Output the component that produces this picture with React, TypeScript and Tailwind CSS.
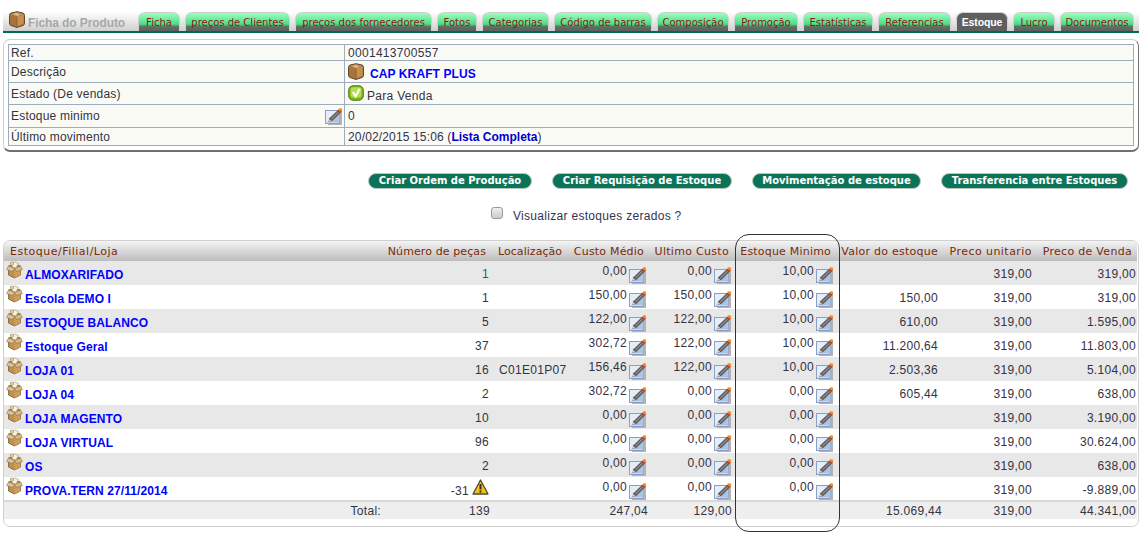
import React from "react";

const Box = ({ className = "" }: { className?: string }) => (
  <svg viewBox="0 0 16 17" className={className}>
    <path d="M8 0.7 L14 2 Q15.5 2.5 15.5 4.5 L15.5 12 Q15.5 14 14 14.5 L8 16.5 L2 14.5 Q0.5 14 0.5 12 L0.5 4.5 Q0.5 2.5 2 2 Z" fill="#a9743a" stroke="#5c4a34" strokeWidth="1" strokeLinejoin="round" />
    <path d="M2 3 L8 1.5 L14 3 L8 5.5 Z" fill="#c9995f" />
    <path d="M8 5.5 L14.6 3.4 L14.6 12.5 L8 15.5 Z" fill="#c88f4e" />
    <path d="M8 5.5 V15.5" stroke="#7d5a2e" strokeWidth="0.8" />
    <path d="M6.5 2 L10 3.2 L9 4.8 L5.5 3.2 Z" fill="#e2c48f" />
  </svg>
);

const OpenBox = () => (
  <svg viewBox="0 0 17 18" className="w-[17px] h-[18px] shrink-0">
    <path d="M2.5 5 L8.5 3 L14.5 5 L14.5 14 L8.5 17 L2.5 14 Z" fill="#c18f4d" stroke="#7a5a30" strokeWidth="0.8" />
    <path d="M8.5 9 V17 L14.5 14 V6 Z" fill="#cf9d5a" />
    <path d="M2.5 5 L0.6 8.5 L6.5 10.5 L8.5 7.5 Z" fill="#dbc7a0" stroke="#8a7248" strokeWidth="0.6" />
    <path d="M14.5 5 L16.4 8.5 L10.5 10.5 L8.5 7.5 Z" fill="#d6ba86" stroke="#8a7248" strokeWidth="0.6" />
    <path d="M5 3 L8.5 0.8 L12.5 2.5 L10 7 L7 6.5 Z" fill="#f7f2e6" stroke="#a08c68" strokeWidth="0.6" />
    <path d="M4 2 L6 0.8 L8 3 L5.5 5 Z" fill="#e6d3ae" stroke="#8a7248" strokeWidth="0.5" />
  </svg>
);

const Edit = ({ className = "" }: { className?: string }) => (
  <svg viewBox="0 0 18 18" className={`w-[18px] h-[18px] shrink-0 ${className}`}>
    <path d="M3 5 H17 V18 H3 Z" fill="#b4b4b4" />
    <rect x="0.5" y="3.5" width="13.5" height="13" fill="#e4edfa" stroke="#8a9fc6" strokeWidth="1" />
    <path d="M1.5 15.5 L13 15.5 L13 6 Z" fill="#a8c2ec" />
    <path d="M3.5 15 L4.3 11.3 L12.8 3.2 L15.6 5.8 L7.2 14 Z" fill="#55535a" />
    <path d="M5.6 11.5 L13 4.5 L14.2 5.8 L6.8 12.8 Z" fill="#8f8578" />
    <path d="M3.5 15 L4.3 11.9 L6.6 14 Z" fill="#e0c8a0" />
    <path d="M12.6 3.4 L14.5 1.4 L17.2 4 L15.4 6 Z" fill="#d63f1e" />
    <circle cx="15.6" cy="2.4" r="1.5" fill="#eb9a20" />
  </svg>
);

const Check = () => (
  <svg viewBox="0 0 16 16" className="w-4 h-4 shrink-0">
    <rect x="0.7" y="0.7" width="14.6" height="14.6" rx="4.5" fill="#7fb414" stroke="#4f7d12" strokeWidth="1" />
    <rect x="2.6" y="2.2" width="10.8" height="10.4" rx="2.4" fill="#b5dd58" />
    <path d="M4.8 7 L7.6 11.4 L11.6 3.8" fill="none" stroke="#ffffff" strokeWidth="2" />
  </svg>
);

const Warn = () => (
  <svg viewBox="0 0 17 16" className="w-[17px] h-4 shrink-0">
    <path d="M8.5 1 L16 15 L1 15 Z" fill="#f2c11c" stroke="#4c4a3a" strokeWidth="1.3" strokeLinejoin="round" />
    <path d="M8.5 5 V10.5" stroke="#33301f" strokeWidth="2" />
    <rect x="7.5" y="11.5" width="2" height="2" fill="#33301f" />
  </svg>
);

const tabs: [string, string][] = [
  ["Ficha", "w-[42px]"],
  ["preços de Clientes", "w-[105px]"],
  ["preços dos fornecedores", "w-[137px]"],
  ["Fotos", "w-[40px]"],
  ["Categorias", "w-[67px]"],
  ["Código de barras", "w-[98px]"],
  ["Composição", "w-[72px]"],
  ["Promoção", "w-[64px]"],
  ["Estatísticas", "w-[70px]"],
  ["Referencias", "w-[73px]"],
  ["Estoque", "w-[52px]"],
  ["Lucro", "w-[42px]"],
  ["Documentos", "w-[74px]"],
];

const Tab = ({ label, w }: { label: string; w: string }) => {
  const active = label === "Estoque";
  return (
    <div
      className={`${w} h-[19px] shrink-0 rounded-t-[7px] border-t border-x flex items-start justify-center pt-[3px] leading-[13px] whitespace-nowrap ${
        active
          ? "border-[#d4d4d4] bg-[#5f5f5f] text-white font-bold text-[10.5px] tracking-[-0.1px] font-['Liberation_Sans',sans-serif]"
          : "border-[#d0d0d0] bg-[linear-gradient(to_bottom,#9affbe_0%,#4fdc88_62%,#5f6f62_76%,#5f5f5f_100%)] text-[#8a1a10] text-[10px] tracking-normal font-['DejaVu_Sans',sans-serif]"
      }`}
    >
      {label}
    </div>
  );
};

const infoRows: { h: string; label: string; value: React.ReactNode; edit?: boolean }[] = [
  { h: "h-[16px]", label: "Ref.", value: <span>0001413700557</span> },
  {
    h: "h-[22px]",
    label: "Descrição",
    value: (
      <span className="flex items-start gap-[6px]">
        <Box className="w-4 h-[17px] shrink-0" />
        <span className="mt-[4px] text-[#0000ff] font-bold tracking-[0.1px]">CAP KRAFT PLUS</span>
      </span>
    ),
  },
  {
    h: "h-[22px]",
    label: "Estado (De vendas)",
    value: (
      <span className="flex items-start gap-[3px]">
        <Check />
        <span className="mt-[4px]">Para Venda</span>
      </span>
    ),
  },
  { h: "h-[23px]", label: "Estoque minimo", value: <span>0</span>, edit: true },
  {
    h: "h-[17px]",
    label: "Último movimento",
    value: (
      <span className="tracking-[0.15px]">
        20/02/2015 15:06 (<span className="text-[#0000cc] font-bold tracking-normal">Lista Completa</span>)
      </span>
    ),
  },
];

const actions: [string, string][] = [
  ["Criar Ordem de Produção", "w-[164px]"],
  ["Criar Requisição de Estoque", "w-[180px]"],
  ["Movimentação de estoque", "w-[169px]"],
  ["Transferencia entre Estoques", "w-[187px]"],
];

const rows: [string, string, string, string, string, string, string, string][] = [
  ["ALMOXARIFADO", "1", "", "0,00", "0,00", "10,00", "", "319,00"],
  ["Escola DEMO I", "1", "", "150,00", "150,00", "10,00", "150,00", "319,00"],
  ["ESTOQUE BALANCO", "5", "", "122,00", "122,00", "10,00", "610,00", "1.595,00"],
  ["Estoque Geral", "37", "", "302,72", "122,00", "10,00", "11.200,64", "11.803,00"],
  ["LOJA 01", "16", "C01E01P07", "156,46", "122,00", "10,00", "2.503,36", "5.104,00"],
  ["LOJA 04", "2", "", "302,72", "0,00", "0,00", "605,44", "638,00"],
  ["LOJA MAGENTO", "10", "", "0,00", "0,00", "0,00", "", "3.190,00"],
  ["LOJA VIRTUAL", "96", "", "0,00", "0,00", "0,00", "", "30.624,00"],
  ["OS", "2", "", "0,00", "0,00", "0,00", "", "638,00"],
  ["PROVA.TERN 27/11/2014", "-31", "", "0,00", "0,00", "0,00", "", "-9.889,00"],
];

const Money = ({ v }: { v: string }) => (
  <div className="flex justify-end items-start pr-[3px]">
    <span className="mt-[3px]">{v}</span>
    <Edit className="ml-[2px] mt-[5px]" />
  </div>
);

const headers: [string, string][] = [
  ["Estoque/Filial/Loja", "text-left pl-[6px] tracking-[0.5px]"],
  ["Número de peças", "text-right pr-[7px] tracking-[0.1px]"],
  ["Localização", "text-left pl-[5px] tracking-[0.05px]"],
  ["Custo Médio", "text-right pr-[6px] tracking-[0.2px]"],
  ["Ultimo Custo", "text-right pr-[6px] tracking-[0.3px]"],
  ["Estoque Minimo", "text-right pr-[6px] tracking-[0.2px]"],
  ["Valor do estoque", "text-right pr-[5px] tracking-[0.25px]"],
  ["Preco unitario", "text-right pr-[5px] tracking-[0.45px]"],
  ["Preco de Venda", "text-right pr-[5px] tracking-[0.3px]"],
];

export default function App() {
  return (
    <div className="relative w-[1142px] h-[560px] bg-white overflow-hidden font-['Liberation_Sans',Arial,sans-serif] text-[12px] leading-[14px] tracking-[0.3px] text-[#333344]">
      {/* Tab strip */}
      <div className="mx-[3px] mt-[12px] h-[21px] border-b-[2px] border-[#006b50] bg-gradient-to-b from-[#ffffff] to-[#cfcfcf] flex items-end pr-[2px]">
        <div className="w-[135px] shrink-0 self-stretch flex items-start pl-[6px] -mt-[1px]">
          <Box className="w-4 h-[17px] shrink-0" />
          <span className="ml-[3px] mt-[5px] font-bold text-[#a8a8a8] tracking-[-0.1px] whitespace-nowrap">Ficha do Produto</span>
        </div>
        <div className="flex gap-[5px]">
          {tabs.map(([t, w]) => (
            <Tab key={t} label={t} w={w} />
          ))}
        </div>
      </div>

      {/* Info panel */}
      <div className="mx-[3px] mt-[6px] h-[113px] rounded-[7px] border border-[#d0d0d0] border-r-[#707070] border-b-[#707070] border-b-2 p-[4px]">
        <div className="border border-[#9eacc0] bg-[#fbfbf6] h-[102px] flex flex-col divide-y divide-[#9eacc0]">
          {infoRows.map((r) => (
            <div key={r.label} className={`flex ${r.h} shrink-0`}>
              <div className="w-[336px] shrink-0 border-r border-[#9eacc0] pl-[2px] pr-[1px] flex items-center justify-between">
                <span className="tracking-[0.2px]">{r.label}</span>
                {r.edit && <Edit />}
              </div>
              <div className="pl-[3px] flex-1 min-w-0 flex items-center">
                <div className="w-full">{r.value}</div>
              </div>
            </div>
          ))}
        </div>
      </div>

      {/* Action buttons */}
      <div className="mt-[21px] h-[16px] flex gap-[20px] pl-[368px]">
        {actions.map(([t, w]) => (
          <div
            key={t}
            className={`${w} h-[16px] rounded-full bg-[#0b7458] border border-[#b8c8c0] text-white font-bold text-[10px] leading-[13px] tracking-normal flex justify-center whitespace-nowrap font-['DejaVu_Sans',sans-serif]`}
          >
            {t}
          </div>
        ))}
      </div>

      {/* Toggle */}
      <div className="mt-[17px] h-[14px] flex items-center pl-[491px]">
        <span className="w-[12px] h-[12px] rounded-[3px] border border-[#9a9a9a] bg-gradient-to-b from-[#eeeeee] to-[#cccccc]" />
        <span className="ml-[10px] text-[#333355] tracking-[0.3px] mt-[6px]">Visualizar estoques zerados ?</span>
      </div>

      {/* Stock table */}
      <div className="mx-[3px] mt-[20px] h-[287px] rounded-[7px] border border-[#d0d0d0] overflow-hidden">
        <table className="w-[1133px] table-fixed border-collapse">
          <colgroup>
            <col className="w-[380px]" />
            <col className="w-[109px]" />
            <col className="w-[78px]" />
            <col className="w-[79px]" />
            <col className="w-[85px]" />
            <col className="w-[102px]" />
            <col className="w-[106px]" />
            <col className="w-[94px]" />
            <col className="w-[100px]" />
          </colgroup>
          <thead>
            <tr className="h-[20px] bg-gradient-to-b from-[#f4f4f4] to-[#bdbdbd]">
              {headers.map(([h, c]) => (
                <th key={h} className={`${c} p-0 pt-[2px] font-normal whitespace-nowrap text-[11px] text-[#7a2a08] font-['DejaVu_Sans',sans-serif]`}>
                  {h}
                </th>
              ))}
            </tr>
          </thead>
          <tbody>
            {rows.map((r, i) => (
              <tr key={r[0]} className={`h-[24px] ${i % 2 === 0 ? "bg-[#e8e8e8]" : "bg-white"}`}>
                <td className="p-0 align-top pl-[2px]">
                  <div className="flex items-start">
                    <OpenBox />
                    <span className="ml-[2px] mt-[7px] text-[#0000ff] font-bold tracking-[0.1px] whitespace-nowrap">{r[0]}</span>
                  </div>
                </td>
                <td className={`p-0 align-top text-right pr-[4px] ${i === 0 ? "text-[#1a5aa0]" : ""}`}>
                  {r[1] === "-31" ? (
                    <div className="flex justify-end items-start">
                      <span className="mt-[7px]">{r[1]}</span>
                      <span className="ml-[3px] mt-[2px]"><Warn /></span>
                    </div>
                  ) : (
                    <div className="mt-[6px]">{r[1]}</div>
                  )}
                </td>
                <td className="p-0 align-top pl-[6px]"><div className="mt-[6px] whitespace-nowrap">{r[2]}</div></td>
                <td className="p-0 align-top"><Money v={r[3]} /></td>
                <td className="p-0 align-top"><Money v={r[4]} /></td>
                <td className="p-0 align-top"><Money v={r[5]} /></td>
                <td className="p-0 align-top text-right pr-[5px]"><div className="mt-[6px]">{r[6]}</div></td>
                <td className="p-0 align-top text-right pr-[5px]"><div className="mt-[6px]">319,00</div></td>
                <td className="p-0 align-top text-right pr-[1px]"><div className="mt-[6px]">{r[7]}</div></td>
              </tr>
            ))}
            <tr className="h-[18px] bg-[#eeeeee] border-t-2 border-[#d8d8d8] align-middle">
              <td className="p-0 text-right pr-[3px]">Total:</td>
              <td className="p-0 text-right pr-[3px]">139</td>
              <td className="p-0" />
              <td className="p-0 text-right pr-[2px]">247,04</td>
              <td className="p-0 text-right pr-[3px]">129,00</td>
              <td className="p-0" />
              <td className="p-0 text-right pr-[1px]">15.069,44</td>
              <td className="p-0 text-right pr-[5px]">319,00</td>
              <td className="p-0 text-right pr-[1px]">44.341,00</td>
            </tr>
          </tbody>
        </table>
      </div>

      {/* Highlight ring drawn over the column */}
      <div className="absolute left-[735px] top-[234px] w-[105px] h-[298px] rounded-[14px] border border-[#333333] pointer-events-none" />
    </div>
  );
}
